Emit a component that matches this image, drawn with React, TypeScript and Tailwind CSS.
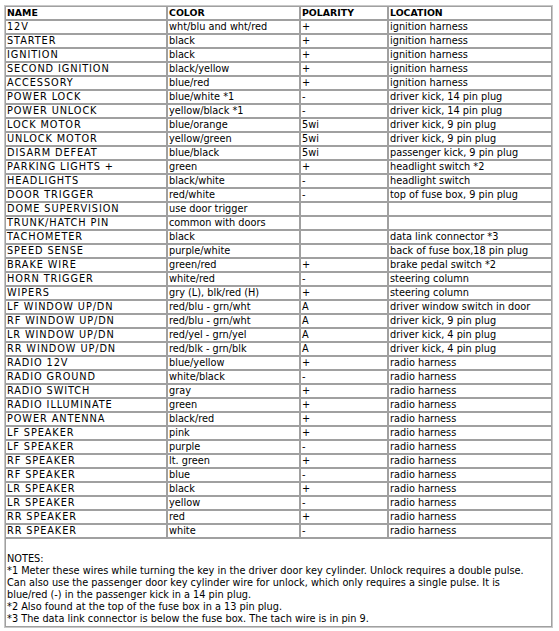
type Row = [string, string, string, string];

const rows: Row[] = [
  ["12V", "wht/blu and wht/red", "+", "ignition harness"],
  ["STARTER", "black", "+", "ignition harness"],
  ["IGNITION", "black", "+", "ignition harness"],
  ["SECOND IGNITION", "black/yellow", "+", "ignition harness"],
  ["ACCESSORY", "blue/red", "+", "ignition harness"],
  ["POWER LOCK", "blue/white *1", "-", "driver kick, 14 pin plug"],
  ["POWER UNLOCK", "yellow/black *1", "-", "driver kick, 14 pin plug"],
  ["LOCK MOTOR", "blue/orange", "5wi", "driver kick, 9 pin plug"],
  ["UNLOCK MOTOR", "yellow/green", "5wi", "driver kick, 9 pin plug"],
  ["DISARM DEFEAT", "blue/black", "5wi", "passenger kick, 9 pin plug"],
  ["PARKING LIGHTS +", "green", "+", "headlight switch *2"],
  ["HEADLIGHTS", "black/white", "-", "headlight switch"],
  ["DOOR TRIGGER", "red/white", "-", "top of fuse box, 9 pin plug"],
  ["DOME SUPERVISION", "use door trigger", "", ""],
  ["TRUNK/HATCH PIN", "common with doors", "", ""],
  ["TACHOMETER", "black", "", "data link connector *3"],
  ["SPEED SENSE", "purple/white", "", "back of fuse box,18 pin plug"],
  ["BRAKE WIRE", "green/red", "+", "brake pedal switch *2"],
  ["HORN TRIGGER", "white/red", "-", "steering column"],
  ["WIPERS", "gry (L), blk/red (H)", "+", "steering column"],
  ["LF WINDOW UP/DN", "red/blu - grn/wht", "A", "driver window switch in door"],
  ["RF WINDOW UP/DN", "red/blu - grn/wht", "A", "driver kick, 9 pin plug"],
  ["LR WINDOW UP/DN", "red/yel - grn/yel", "A", "driver kick, 4 pin plug"],
  ["RR WINDOW UP/DN", "red/blk - grn/blk", "A", "driver kick, 4 pin plug"],
  ["RADIO 12V", "blue/yellow", "+", "radio harness"],
  ["RADIO GROUND", "white/black", "-", "radio harness"],
  ["RADIO SWITCH", "gray", "+", "radio harness"],
  ["RADIO ILLUMINATE", "green", "+", "radio harness"],
  ["POWER ANTENNA", "black/red", "+", "radio harness"],
  ["LF SPEAKER", "pink", "+", "radio harness"],
  ["LF SPEAKER", "purple", "-", "radio harness"],
  ["RF SPEAKER", "lt. green", "+", "radio harness"],
  ["RF SPEAKER", "blue", "-", "radio harness"],
  ["LR SPEAKER", "black", "+", "radio harness"],
  ["LR SPEAKER", "yellow", "-", "radio harness"],
  ["RR SPEAKER", "red", "+", "radio harness"],
  ["RR SPEAKER", "white", "-", "radio harness"],
];

const cell = "border border-[#a0a0a0] px-[1px] py-0 h-[14px] leading-[12px] whitespace-nowrap overflow-hidden text-left align-middle";

export default function App() {
  return (
    <div className="bg-white min-h-screen pt-[5px] pl-[4px] font-['DejaVu_Sans',sans-serif] text-[9.75px] text-black">
      <table className="table-fixed w-[549px] border-separate border-spacing-0 border border-[#c8c8c8]">
        <colgroup>
          <col className="w-[162px]" />
          <col className="w-[133px]" />
          <col className="w-[88px]" />
          <col className="w-[164px]" />
        </colgroup>
        <thead>
          <tr>
            <th className={`${cell} font-bold text-[9.4px]`}>NAME</th>
            <th className={`${cell} font-bold text-[9.4px]`}>COLOR</th>
            <th className={`${cell} font-bold text-[9.4px]`}>POLARITY</th>
            <th className={`${cell} font-bold text-[9.4px]`}>LOCATION</th>
          </tr>
        </thead>
        <tbody>
          {rows.map((r, i) => (
            <tr key={i}>
              <td className={`${cell} tracking-[0.9px]`}>{r[0]}</td>
              <td className={cell}>{r[1]}</td>
              <td className={cell}>{r[2]}</td>
              <td className={cell}>{r[3]}</td>
            </tr>
          ))}
          <tr>
            <td colSpan={4} className="border border-[#a0a0a0] px-[1px] pt-[2px] pb-[1px] leading-[12px] whitespace-nowrap">
              <br />
              NOTES:
              <br />
              *1 Meter these wires while turning the key in the driver door key cylinder. Unlock requires a double pulse.
              <br />
              Can also use the passenger door key cylinder wire for unlock, which only requires a single pulse. It is
              <br />
              blue/red (-) in the passenger kick in a 14 pin plug.
              <br />
              *2 Also found at the top of the fuse box in a 13 pin plug.
              <br />
              *3 The data link connector is below the fuse box. The tach wire is in pin 9.
            </td>
          </tr>
        </tbody>
      </table>
    </div>
  );
}
